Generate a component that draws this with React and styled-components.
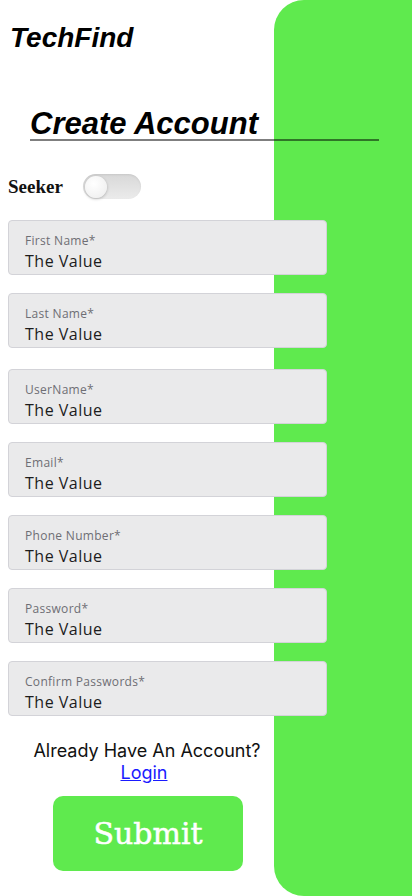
import React from "react";
import styled, { createGlobalStyle } from "styled-components";

const Global = createGlobalStyle`
  html, body { margin: 0; padding: 0; background: #fff; }
  body { font-family: Inter, "Liberation Sans", sans-serif; }
  * { box-sizing: border-box; }
`;

const Page = styled.div`
  position: relative;
  width: 412px;
  height: 896px;
  overflow: hidden;
  background: #fff;
`;

const GreenPanel = styled.div`
  position: absolute;
  top: 0;
  left: 274px;
  width: 138px;
  height: 896px;
  background: #5fea4e;
  border-radius: 30px 0 0 30px;
`;

const Content = styled.div`
  position: relative;
  display: flex;
  flex-direction: column;
  padding: 22px 0 0 8px;
`;

const Brand = styled.h1`
  margin: 0 0 0 2px;
  font-family: "Liberation Sans", Arial, sans-serif;
  font-style: italic;
  font-weight: 700;
  font-size: 28px;
  line-height: 32px;
  color: #000;
`;

const Title = styled.h2`
  margin: 55px 0 0 22px;
  width: 349px;
  font-family: "Liberation Sans", Arial, sans-serif;
  font-style: italic;
  font-weight: 700;
  font-size: 31px;
  line-height: 30px;
  color: #000;
  border-bottom: 2px solid rgba(0, 0, 0, 0.5);
  padding-left: 0;
`;

const ToggleRow = styled.div`
  display: flex;
  align-items: center;
  gap: 20px;
  margin-top: 33px;
  height: 25px;
`;

const ToggleLabel = styled.span`
  font-family: "Liberation Serif", "DejaVu Serif", serif;
  font-weight: 700;
  font-size: 19px;
  color: #111;
`;

const Track = styled.div`
  position: relative;
  width: 58px;
  height: 25px;
  border-radius: 13px;
  background: linear-gradient(180deg, #d8d8d8, #ebebeb);
  box-shadow: inset 0 1px 2px rgba(0, 0, 0, 0.08);
`;

const Knob = styled.div`
  position: absolute;
  top: 1.5px;
  left: 2px;
  width: 22px;
  height: 22px;
  border-radius: 50%;
  background: radial-gradient(circle at 40% 35%, #ffffff, #ececec);
  box-shadow: 0 1px 3px rgba(0, 0, 0, 0.25);
`;

const Fields = styled.div`
  display: flex;
  flex-direction: column;
  gap: 18px;
  margin-top: 21px;
`;

const Field = styled.div`
  width: 319px;
  height: 55px;
  margin-top: ${(p) => p.$extra || 0}px;
  background: #eaeaeb;
  border: 1px solid #d3d3d8;
  border-radius: 4px;
  padding: 12px 0 0 16px;
  display: flex;
  flex-direction: column;
`;

const FieldLabel = styled.span`
  font-family: "Open Sans", "Noto Sans", sans-serif;
  font-size: 12px;
  line-height: 16px;
  letter-spacing: 0.3px;
  color: #6e6e74;
`;

const FieldValue = styled.span`
  font-family: "Open Sans", "Noto Sans", sans-serif;
  font-size: 16px;
  line-height: 22px;
  letter-spacing: 0.5px;
  color: #1c1c1c;
  margin-top: 1px;
`;

const Footer = styled.div`
  width: 278px;
  display: flex;
  flex-direction: column;
  align-items: center;
  margin-top: 24px;
  margin-left: -8px;
`;

const Question = styled.p`
  margin: 0;
  font-family: Inter, "Liberation Sans", sans-serif;
  font-size: 18px;
  line-height: 22px;
  color: #111;
  padding-left: 16px;
`;

const LoginLink = styled.a`
  margin-left: 10px;
  font-family: Inter, "Liberation Sans", sans-serif;
  font-size: 18px;
  line-height: 22px;
  color: #1a1aff;
  text-decoration: underline;
  cursor: pointer;
`;

const SubmitButton = styled.button`
  margin-top: 12px;
  margin-left: 18px;
  width: 190px;
  height: 75px;
  border: none;
  border-radius: 10px;
  background: #5fea4e;
  color: #fff;
  font-family: "DejaVu Serif", "Liberation Serif", serif;
  font-size: 30px;
  font-weight: 400;
  -webkit-text-stroke: 0.5px #fff;
  cursor: pointer;
`;

const fields = [
  { label: "First Name*" },
  { label: "Last Name*" },
  { label: "UserName*", extra: 3 },
  { label: "Email*" },
  { label: "Phone Number*" },
  { label: "Password*" },
  { label: "Confirm Passwords*" },
];

export default function App() {
  return (
    <>
      <Global />
      <Page>
        <GreenPanel />
        <Content>
          <Brand>TechFind</Brand>
          <Title>Create Account</Title>
          <ToggleRow>
            <ToggleLabel>Seeker</ToggleLabel>
            <Track>
              <Knob />
            </Track>
          </ToggleRow>
          <Fields>
            {fields.map((f) => (
              <Field key={f.label} $extra={f.extra}>
                <FieldLabel>{f.label}</FieldLabel>
                <FieldValue>The Value</FieldValue>
              </Field>
            ))}
          </Fields>
          <Footer>
            <Question>Already Have An Account?</Question>
            <LoginLink>Login</LoginLink>
            <SubmitButton>Submit</SubmitButton>
          </Footer>
        </Content>
      </Page>
    </>
  );
}
